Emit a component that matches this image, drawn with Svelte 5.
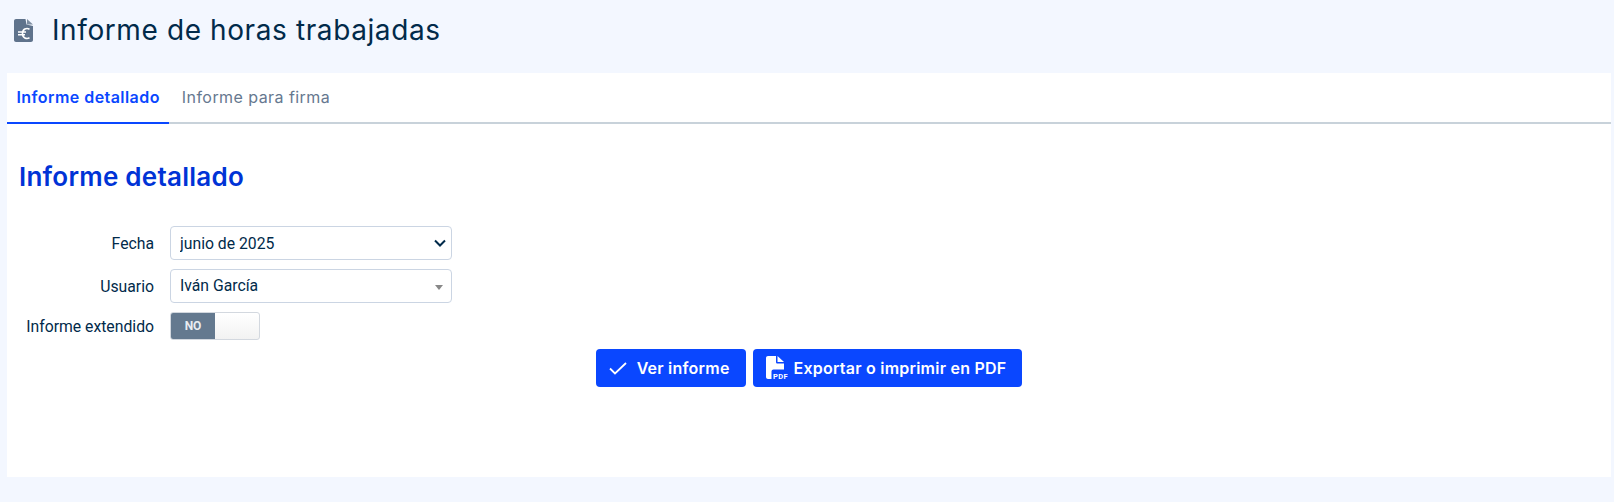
<script>
  let fecha = $state('junio de 2025');
  let extendido = $state(false);
  let activeTab = $state(0);
  const tabs = ['Informe detallado', 'Informe para firma'];
</script>

<div class="page">
  <header class="top">
    <svg class="doc-icon" viewBox="0 0 19 23" width="19" height="23">
      <path fill="#5f738c" d="M2 0h9.500l1 5.500 6.500 1.500v14c0 1.100-.9 2-2 2H2c-1.100 0-2-.9-2-2V2C0 .9.900 0 2 0z" />
      <path fill="#7d8da1" d="M13 0 19 5.500h-6z" />
      <path fill="none" stroke="#fff" stroke-width="1.600" d="M15.500 10.200c-3-1.600-7-.2-7 4.300s4 5.900 7 4.300M4 13h8M4 15.700h7" />
    </svg>
    <h1>Informe de horas trabajadas</h1>
  </header>

  <section class="card">
    <nav class="tabs">
      {#each tabs as tab, i}
        <button class="tab" class:active={activeTab === i} onclick={() => (activeTab = i)}>{tab}</button>
      {/each}
    </nav>

    <div class="body">
      <h2>Informe detallado</h2>

      <div class="form">
        <div class="row">
          <label for="fecha">Fecha</label>
          <select id="fecha" bind:value={fecha}>
            <option>junio de 2025</option>
            <option>mayo de 2025</option>
          </select>
        </div>
        <div class="row">
          <label for="usuario">Usuario</label>
          <div id="usuario" class="combo">
            <span>Iván García</span>
            <i class="caret"></i>
          </div>
        </div>
        <div class="row toggle-row">
          <span class="label">Informe extendido</span>
          <button class="toggle" onclick={() => (extendido = !extendido)}>
            <span class="no">{extendido ? 'SÍ' : 'NO'}</span>
          </button>
        </div>
      </div>

      <div class="actions">
        <button class="btn">
          <span class="ico">
            <svg viewBox="0 0 18 13" width="18" height="13">
              <path fill="none" stroke="#fff" stroke-width="1.800" d="M1 6.500 6 11.500 17 1" />
            </svg>
          </span>
          Ver informe
        </button>
        <button class="btn">
          <span class="ico">
            <svg viewBox="0 0 22 24" width="22" height="24">
              <path fill="#fff" d="M2 0h8v6c0 .9.700 1.600 1.600 1.600H18v5.900H7.500c-1.100 0-2 .9-2 2V23H2c-1.100 0-2-.9-2-2V2C0 .9.900 0 2 0z" />
              <path fill="#fff" d="M11.500 0 18 6h-6.500z" />
              <text x="7" y="22.800" class="pdf">PDF</text>
            </svg>
          </span>
          Exportar o imprimir en PDF
        </button>
      </div>
    </div>
  </section>
</div>

<style>
  :global(body) {
    margin: 0;
    background: #f3f7ff;
    font-family: "Roboto", "Liberation Sans", sans-serif;
    color: #012a4a;
  }

  .page {
    height: 502px;
    padding: 0 3px 0 7px;
    box-sizing: border-box;
  }

  .top {
    height: 73px;
    display: flex;
    align-items: center;
    padding: 0 0 12px 7px;
    box-sizing: border-box;
    gap: 19px;
  }

  .doc-icon { flex: none; }

  h1 {
    margin: 0 0 2px;
    font-family: "Inter", "Noto Sans", sans-serif;
    font-weight: 400;
    font-size: 28px;
    letter-spacing: 0.6px;
    color: #012a4a;
  }

  .card {
    background: #fff;
    height: 404px;
  }

  .tabs {
    display: flex;
    gap: 3px;
    height: 51px;
    border-bottom: 2px solid #c8d2da;
    box-sizing: border-box;
  }

  .tab {
    height: 51px;
    padding: 0 9.500px 2px;
    border: 0;
    border-bottom: 2px solid transparent;
    background: none;
    font-family: "Inter", "Noto Sans", sans-serif;
    font-size: 16px;
    letter-spacing: 0.44px;
    color: #66788f;
    cursor: pointer;
  }

  .tab.active {
    color: #0a47ff;
    font-weight: 600;
    border-bottom-color: #0a47ff;
  }

  .body { padding: 0 12px; }

  h2 {
    margin: 0;
    padding-top: 38px;
    font-family: "Inter", "Noto Sans", sans-serif;
    font-weight: 600;
    font-size: 26px;
    letter-spacing: 0.25px;
    line-height: 30px;
    color: #0033d6;
  }

  .form {
    margin-top: 34px;
    display: flex;
    flex-direction: column;
    gap: 9px;
  }

  .row {
    display: grid;
    grid-template-columns: 135px 282px;
    column-gap: 16px;
    align-items: center;
  }

  label, .label {
    text-align: right;
    font-size: 15.750px;
    white-space: nowrap;
  }

  select, .combo {
    height: 34px;
    box-sizing: border-box;
    border: 1px solid #cbd5e3;
    border-radius: 4px;
    background: #fff;
    font-family: "Roboto", "Liberation Sans", sans-serif;
    font-size: 15.750px;
    color: #012a4a;
  }

  select {
    width: 100%;
    padding: 0 9px;
    appearance: none;
    background-image: url("data:image/svg+xml,%3Csvg xmlns='http://www.w3.org/2000/svg' viewBox='0 0 12 8'%3E%3Cpath fill='none' stroke='%23012a4a' stroke-width='2' d='M1 1.500l5 5 5-5'/%3E%3C/svg%3E");
    background-repeat: no-repeat;
    background-position: right 5px center;
    background-size: 12px 8px;
  }

  .combo {
    display: flex;
    align-items: center;
    justify-content: space-between;
    padding: 0 8px 2px 9px;
  }

  .caret {
    width: 0;
    height: 0;
    margin: 5px 0 0;
    border-left: 4px solid transparent;
    border-right: 4px solid transparent;
    border-top: 5px solid #888;
  }

  .toggle {
    width: 90px;
    height: 28px;
    padding: 0;
    border: 1px solid #d3d8df;
    border-radius: 3px;
    background: linear-gradient(#fff, #f2f2f2);
    display: flex;
    overflow: hidden;
    cursor: pointer;
  }

  .no {
    width: 44px;
    height: 100%;
    background: #64798f;
    color: #e8ecf1;
    font-family: "Roboto", "Liberation Sans", sans-serif;
    font-size: 12px;
    font-weight: 700;
    display: flex;
    align-items: center;
    justify-content: center;
  }

  .actions {
    margin-top: 9px;
    display: flex;
    justify-content: center;
    gap: 7px;
  }

  .btn {
    height: 38px;
    padding: 0 16px 0 13px;
    border: 0;
    border-radius: 4px;
    background: #0a47ff;
    color: #fff;
    font-family: "Inter", "Noto Sans", sans-serif;
    font-size: 16px;
    letter-spacing: 0.22px;
    font-weight: 600;
    display: flex;
    align-items: center;
    cursor: pointer;
  }

  .ico {
    width: 28px;
    display: flex;
    align-items: center;
  }

  .pdf {
    font-family: "Roboto", sans-serif;
    font-size: 7.500px;
    font-weight: 700;
    fill: #fff;
    letter-spacing: 0.4px;
  }
</style>
